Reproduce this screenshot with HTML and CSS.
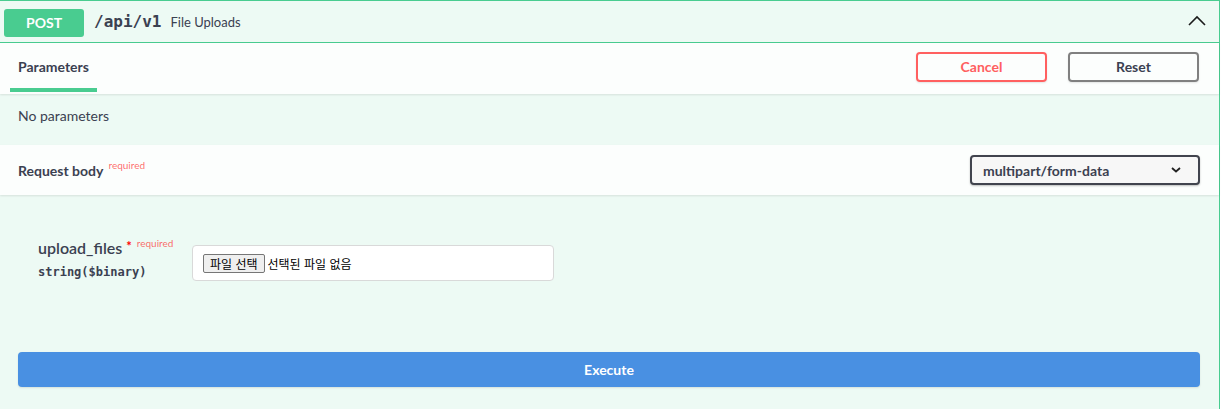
FILE: index.html
```html
<!DOCTYPE html>
<html lang="ko">
<head>
<meta charset="utf-8">
<title>POST /api/v1</title>
<link rel="stylesheet" href="styles.css">
</head>
<body>
<div class="opblock">
  <div class="summary">
    <span class="method">POST</span>
    <span class="path">/api/v1</span>
    <span class="desc">File Uploads</span>
    <svg class="arrow-up" width="20" height="20" viewBox="0 0 20 20" aria-hidden="true">
      <path d="M2 14 L10 6 L18 14" fill="none" stroke="#1b1b1b" stroke-width="1.6"/>
    </svg>
  </div>

  <div class="section-header">
    <div class="tab"><h4>Parameters</h4></div>
    <div class="actions">
      <button class="btn btn-cancel">Cancel</button>
      <button class="btn btn-reset">Reset</button>
    </div>
  </div>

  <div class="description">
    <p>No parameters</p>
  </div>

  <div class="section-header body-header">
    <h4 class="rb-title">Request body <span class="req-sup">required</span></h4>
    <div class="select">
      <span>multipart/form-data</span>
      <svg width="10" height="6" viewBox="0 0 10 6" aria-hidden="true">
        <path d="M1 1 L5 4.5 L9 1" fill="none" stroke="#222" stroke-width="1.8"/>
      </svg>
    </div>
  </div>

  <div class="body-content">
    <div class="param-row">
      <div class="param-name">
        <div class="name-line">upload_files<span class="star">*</span><span class="req-small">required</span></div>
        <div class="type">string($binary)</div>
      </div>
      <div class="param-value">
        <div class="file-box">
          <span class="file-btn">파일 선택</span>
          <span class="file-text">선택된 파일 없음</span>
        </div>
      </div>
    </div>
    <button class="execute">Execute</button>
  </div>
</div>
</body>
</html>
```

FILE: styles.css
```css
* { box-sizing: border-box; }
html, body { margin: 0; padding: 0; background: #ffffff; }
body {
  font-family: Lato, "Noto Sans CJK KR", sans-serif;
  color: #3b4151;
}
.opblock {
  margin-left: -1px;
  width: 1221px;
  border: 1px solid #49cc90;
  border-bottom: none;
  background: #edfaf4;
  min-height: 420px;
}
.summary {
  height: 42px;
  border-bottom: 1px solid #49cc90;
  display: flex;
  align-items: center;
  padding: 0 12px 0 4px;
}
.method {
  width: 80px;
  height: 28px;
  background: #49cc90;
  color: #fff;
  border-radius: 3px;
  font-weight: 700;
  font-size: 14px;
  display: flex;
  align-items: center;
  justify-content: center;
  margin-top: 2px;
}
.path {
  font-family: "DejaVu Sans Mono", monospace;
  font-weight: 700;
  font-size: 16px;
  margin-left: 10px;
  color: #3b4151;
}
.desc {
  font-size: 13px;
  margin-left: 9px;
  color: #3b4151;
  flex: 1;
}
.arrow-up { margin-top: -1px; }

.section-header {
  height: 51px;
  background: #fcfefd;
  box-shadow: 0 1px 2px rgba(0,0,0,0.1);
  display: flex;
  align-items: stretch;
  justify-content: space-between;
  padding: 0 20px 0 10px;
  position: relative;
}
.tab {
  display: flex;
  align-items: center;
  padding: 1px 8px 0;
  border-bottom: 4px solid #49cc90;
  margin-bottom: 2px;
}
.tab h4, .rb-title {
  margin: 0;
  font-size: 14px;
  font-weight: 700;
  color: #3b4151;
}
.actions {
  display: flex;
  align-items: center;
  gap: 21px;
  padding-bottom: 4px;
}
.btn {
  width: 131px;
  height: 30px;
  border-radius: 4px;
  background: transparent;
  font-family: Lato, "Noto Sans CJK KR", sans-serif;
  font-size: 14px;
  font-weight: 700;
  box-shadow: 0 1px 2px rgba(0,0,0,0.1);
  padding: 0;
  cursor: pointer;
}
.btn-cancel { border: 2px solid #ff6060; color: #ff6060; }
.btn-reset { border: 2px solid #808080; color: #3b4151; }

.description {
  height: 51px;
  padding: 12px 18px 0;
}
.description p {
  margin: 0;
  font-size: 14px;
  line-height: 20px;
  color: #3b4151;
}

.body-header {
  height: 50px;
  padding: 0 19px 0 18px;
  align-items: center;
}
.req-sup {
  font-size: 10px;
  font-weight: 400;
  color: rgba(255,0,0,0.6);
  position: relative;
  top: -7px;
  margin-left: 2px;
}
.select {
  width: 230px;
  height: 30px;
  border: 2px solid #41444e;
  border-radius: 4px;
  background: #f7f7f7;
  box-shadow: 0 1px 2px rgba(0,0,0,0.25);
  display: flex;
  align-items: center;
  justify-content: space-between;
  padding: 0 17px 0 11px;
  font-size: 14px;
  font-weight: 700;
  color: #3b4151;
}

.body-content {
  padding: 43px 19px 20px 18px;
}
.param-row {
  display: flex;
  align-items: flex-start;
  padding-left: 20px;
}
.param-name { width: 154px; }
.name-line {
  font-size: 16px;
  line-height: 20px;
  color: #3b4151;
  font-weight: 600;
}
.star {
  color: red;
  font-size: 13px;
  font-weight: 700;
  position: relative;
  top: -3px;
  margin-left: 4px;
}
.req-small {
  font-size: 10px;
  font-weight: 400;
  color: rgba(255,0,0,0.6);
  position: relative;
  top: -7px;
  margin-left: 5px;
}
.type {
  font-family: "DejaVu Sans Mono", monospace;
  font-size: 12px;
  font-weight: 700;
  line-height: 16px;
  margin-top: 4px;
  color: #3b4151;
}
.param-value { margin-top: 7px; }
.file-box {
  width: 362px;
  height: 36px;
  background: #fff;
  border: 1px solid #d9d9d9;
  border-radius: 4px;
  display: flex;
  align-items: center;
  padding-left: 10px;
  font-family: "Noto Sans CJK KR", sans-serif;
  font-size: 12px;
}
.file-btn {
  display: inline-flex;
  align-items: center;
  height: 19px;
  padding: 0 6px;
  border: 1px solid #767676;
  border-radius: 2px;
  background: #efefef;
  color: #000;
}
.file-text { margin-left: 3px; color: #000; }

.execute {
  display: block;
  width: 1182px;
  height: 35px;
  margin-top: 71px;
  border: none;
  border-radius: 4px;
  background: #4990e2;
  color: #fff;
  font-family: Lato, "Noto Sans CJK KR", sans-serif;
  font-size: 14px;
  font-weight: 700;
  box-shadow: 0 1px 2px rgba(0,0,0,0.1);
  cursor: pointer;
}
```
